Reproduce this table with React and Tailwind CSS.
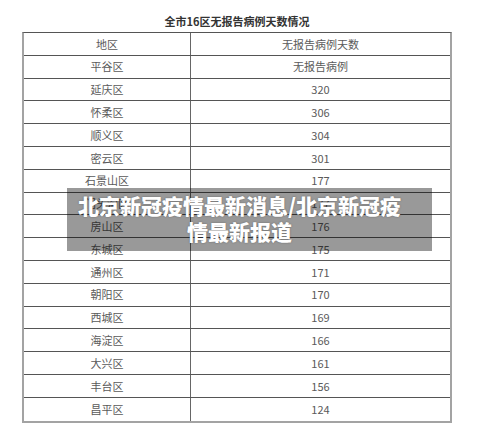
import React from "react";

const rows = [
  ["平谷区", "无报告病例"],
  ["延庆区", "320"],
  ["怀柔区", "306"],
  ["顺义区", "304"],
  ["密云区", "301"],
  ["石景山区", "177"],
  ["门头沟区", "177"],
  ["房山区", "176"],
  ["东城区", "175"],
  ["通州区", "171"],
  ["朝阳区", "170"],
  ["西城区", "169"],
  ["海淀区", "166"],
  ["大兴区", "161"],
  ["丰台区", "156"],
  ["昌平区", "124"],
];

const font = { fontFamily: '"Noto Sans CJK SC", "Noto Sans", sans-serif' };

export default function App() {
  return (
    <div className="relative w-[500px] h-[439px] bg-white overflow-hidden" style={font}>
      <div className="ml-[22px] w-[430px] h-[32px] pt-[14px] text-center text-[11px] leading-[14px] font-bold text-[#333]">
        全市16区无报告病例天数情况
      </div>
      <div className="ml-[22px] w-[430px] border-l-2 border-r-2 border-b-2 border-[#a3a3a3] border-t border-t-[#555]">
        <div className="flex h-[22.8px] border-b border-[#555] text-[11px] text-[#5a5a5a]">
          <div className="w-[167px] flex items-center justify-center border-r border-[#666]">地区</div>
          <div className="flex-1 flex items-center justify-center">无报告病例天数</div>
        </div>
        {rows.map(([a, b], i) => (
          <div
            key={a}
            className={
              "flex h-[22.8px] text-[11px] text-[#5a5a5a] " +
              (i < rows.length - 1 ? "border-b border-[#555]" : "")
            }
          >
            <div className="w-[167px] flex items-center justify-center border-r border-[#666]">{a}</div>
            <div className="flex-1 flex items-center justify-center">{b}</div>
          </div>
        ))}
      </div>
      <div className="absolute left-[67px] top-[188px] w-[365px] h-[63px] bg-[rgba(0,0,0,0.4)] flex flex-col justify-center pl-[10px] pr-[30px] pb-[4px]">
        <div className="text-center text-white font-black text-[21px] leading-[26px] [text-shadow:0_0_2px_rgba(0,0,0,0.35)] whitespace-nowrap">
          北京新冠疫情最新消息/北京新冠疫
        </div>
        <div className="text-center text-white font-black text-[21px] leading-[26px] [text-shadow:0_0_2px_rgba(0,0,0,0.35)]">
          情最新报道
        </div>
      </div>
    </div>
  );
}
